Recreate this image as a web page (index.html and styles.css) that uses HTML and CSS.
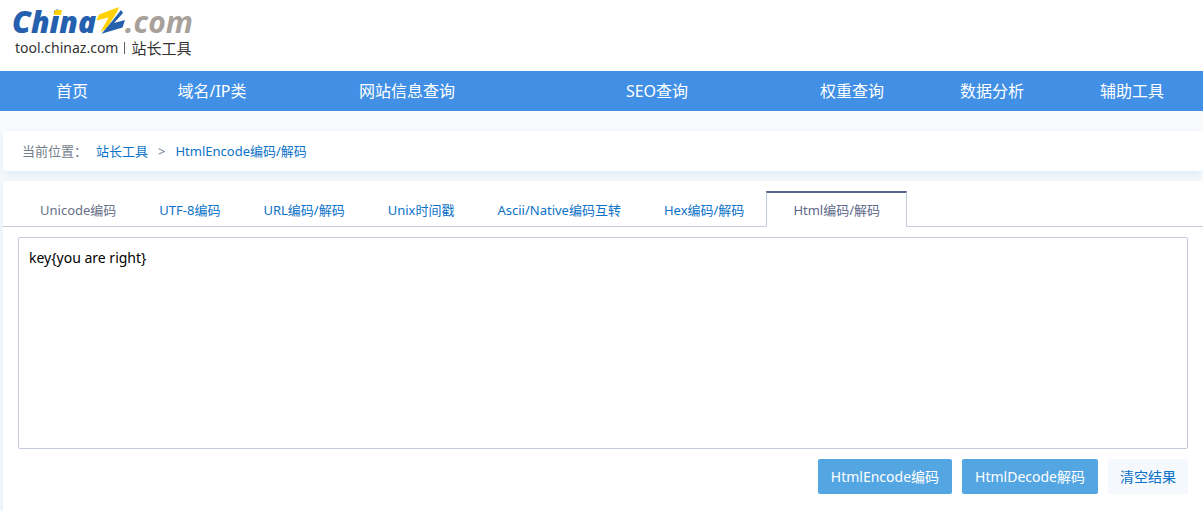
FILE: index.html
```
<!DOCTYPE html>
<html lang="zh-CN">
<head>
<meta charset="utf-8">
<meta name="viewport" content="width=device-width, initial-scale=1">
<title>HtmlEncode编码/解码 - 站长工具</title>
<link rel="stylesheet" href="styles.css">
</head>
<body>
<header class="header">
  <a class="brand" href="#">
    <svg class="logo" width="184" height="34" viewBox="0 0 184 34" role="img" aria-label="ChinaZ.com">
      <text class="logo-china" x="0" y="28">China</text>
      <path class="logo-dot" d="M43 5h7l-1 5h-7z"/>
      <path class="logo-gold" d="M87 9.5L107 2L105 7L95 23L88.5 27L96.5 12.5L84.5 15.5z"/>
      <path class="logo-blue" d="M109 5L111 8L102 18L113 15L110.5 22.5L89.5 28.8L97 20z"/>
      <text class="logo-com" x="113" y="28">.com</text>
    </svg>
    <span class="brand-sub"><span>tool.chinaz.com</span><span class="brand-rule"></span><span>站长工具</span></span>
  </a>
</header>
<nav class="nav" aria-label="主导航">
  <a href="#">首页</a>
  <a href="#">域名/IP类</a>
  <a href="#">网站信息查询</a>
  <a href="#">SEO查询</a>
  <a href="#">权重查询</a>
  <a href="#">数据分析</a>
  <a href="#">辅助工具</a>
</nav>
<main class="main">
  <div class="card crumbs">
    <span>当前位置：</span>
    <a href="#">站长工具</a>
    <span class="crumb-sep">&gt;</span>
    <a href="#">HtmlEncode编码/解码</a>
  </div>
  <section class="card tool">
    <div class="tabs">
      <a class="tab muted" href="#">Unicode编码</a>
      <a class="tab" href="#">UTF-8编码</a>
      <a class="tab" href="#">URL编码/解码</a>
      <a class="tab" href="#">Unix时间戳</a>
      <a class="tab" href="#">Ascii/Native编码互转</a>
      <a class="tab" href="#">Hex编码/解码</a>
      <a class="tab active" href="#" aria-current="page">Html编码/解码</a>
    </div>
    <form class="form">
      <textarea class="content" aria-label="内容" spellcheck="false">key{you are right}</textarea>
      <div class="actions">
        <button class="btn" type="button">HtmlEncode编码</button>
        <button class="btn" type="button">HtmlDecode解码</button>
        <button class="btn plain" type="button">清空结果</button>
      </div>
    </form>
  </section>
</main>
</body>
</html>
```
FILE: styles.css
```
* { box-sizing: border-box; }
body {
  margin: 0;
  min-height: 100vh;
  display: flex;
  flex-direction: column;
  background: #f8fafc;
  font-family: "Noto Sans", "Noto Sans CJK SC", sans-serif;
  font-size: 13px;
  line-height: 20px;
  color: #737d89;
}
a { color: #0b72c8; text-decoration: none; }
.header { height: 71px; padding: 5px 12px 0; background: #fff; }
.brand { display: inline-flex; flex-direction: column; color: #333; }
.logo { display: block; overflow: visible; }
.logo text { font: italic 700 30px "Noto Sans", sans-serif; }
.logo .logo-china { font: italic 800 30px "Open Sans", sans-serif; }
.logo-china, .logo-blue { fill: #2460ae; }
.logo-dot, .logo-gold { fill: #ffd200; }
.logo .logo-com { fill: #a8a19a; }
.brand-sub {
  display: flex;
  align-items: center;
  gap: 6px;
  padding-left: 3px;
  font-size: 14px;
  line-height: 18px;
}
.brand-sub span:last-child { font-size: 15px; }
.brand-rule { width: 1px; height: 12px; background: #666; }
.nav {
  display: grid;
  grid-template-columns: 14fr 14fr 25fr 25fr 14fr 14fr 14fr;
  padding: 0 1px 0 2px;
  background: #4190e6;
}
.nav a { color: #fff; font-size: 16px; line-height: 40px; text-align: center; }
.main {
  flex: 1;
  display: flex;
  flex-direction: column;
  gap: 10px;
  padding: 20px 0 0 3px;
}
.card {
  background: #fff;
  border-radius: 3px;
  box-shadow: 0 4px 10px #dfebf6;
}
.crumbs { display: flex; align-items: center; height: 40px; padding: 0 19px; }
.crumb-sep { margin: 0 10px; }
.crumbs span:first-child { margin-right: 9px; }
.tool { flex: 1; border-radius: 3px 3px 0 0; }
.tabs {
  display: flex;
  gap: 1px;
  padding: 10px 16px 0;
  border-bottom: 1px solid #c2cade;
}
.tab {
  height: 36px;
  margin-bottom: -1px;
  padding: 0 20px;
  border: 1px solid transparent;
  border-top-width: 2px;
  line-height: 34px;
}
.tab.muted { color: #666f88; }
.tab.active {
  padding: 0 26px;
  border-color: #56678c #c2cade #fff;
  background: #fff;
  color: #5b6888;
}
.form { padding: 10px 15px 17px; }
.content {
  display: block;
  width: 100%;
  height: 212px;
  padding: 10px;
  border: 1px solid #c2cade;
  border-radius: 2px;
  background: #fff;
  color: #000;
  font: inherit;
  font-size: 14px;
  resize: none;
  outline: none;
}
.actions { display: flex; justify-content: flex-end; gap: 10px; margin-top: 10px; }
.btn {
  height: 35px;
  padding: 0 13px;
  border: 0;
  border-radius: 2px;
  background: #54a6e3;
  color: #fff;
  font: inherit;
  font-size: 14px;
}
.btn.plain { padding: 0 12px; background: #f5f9fd; color: #0b72c8; }
```
